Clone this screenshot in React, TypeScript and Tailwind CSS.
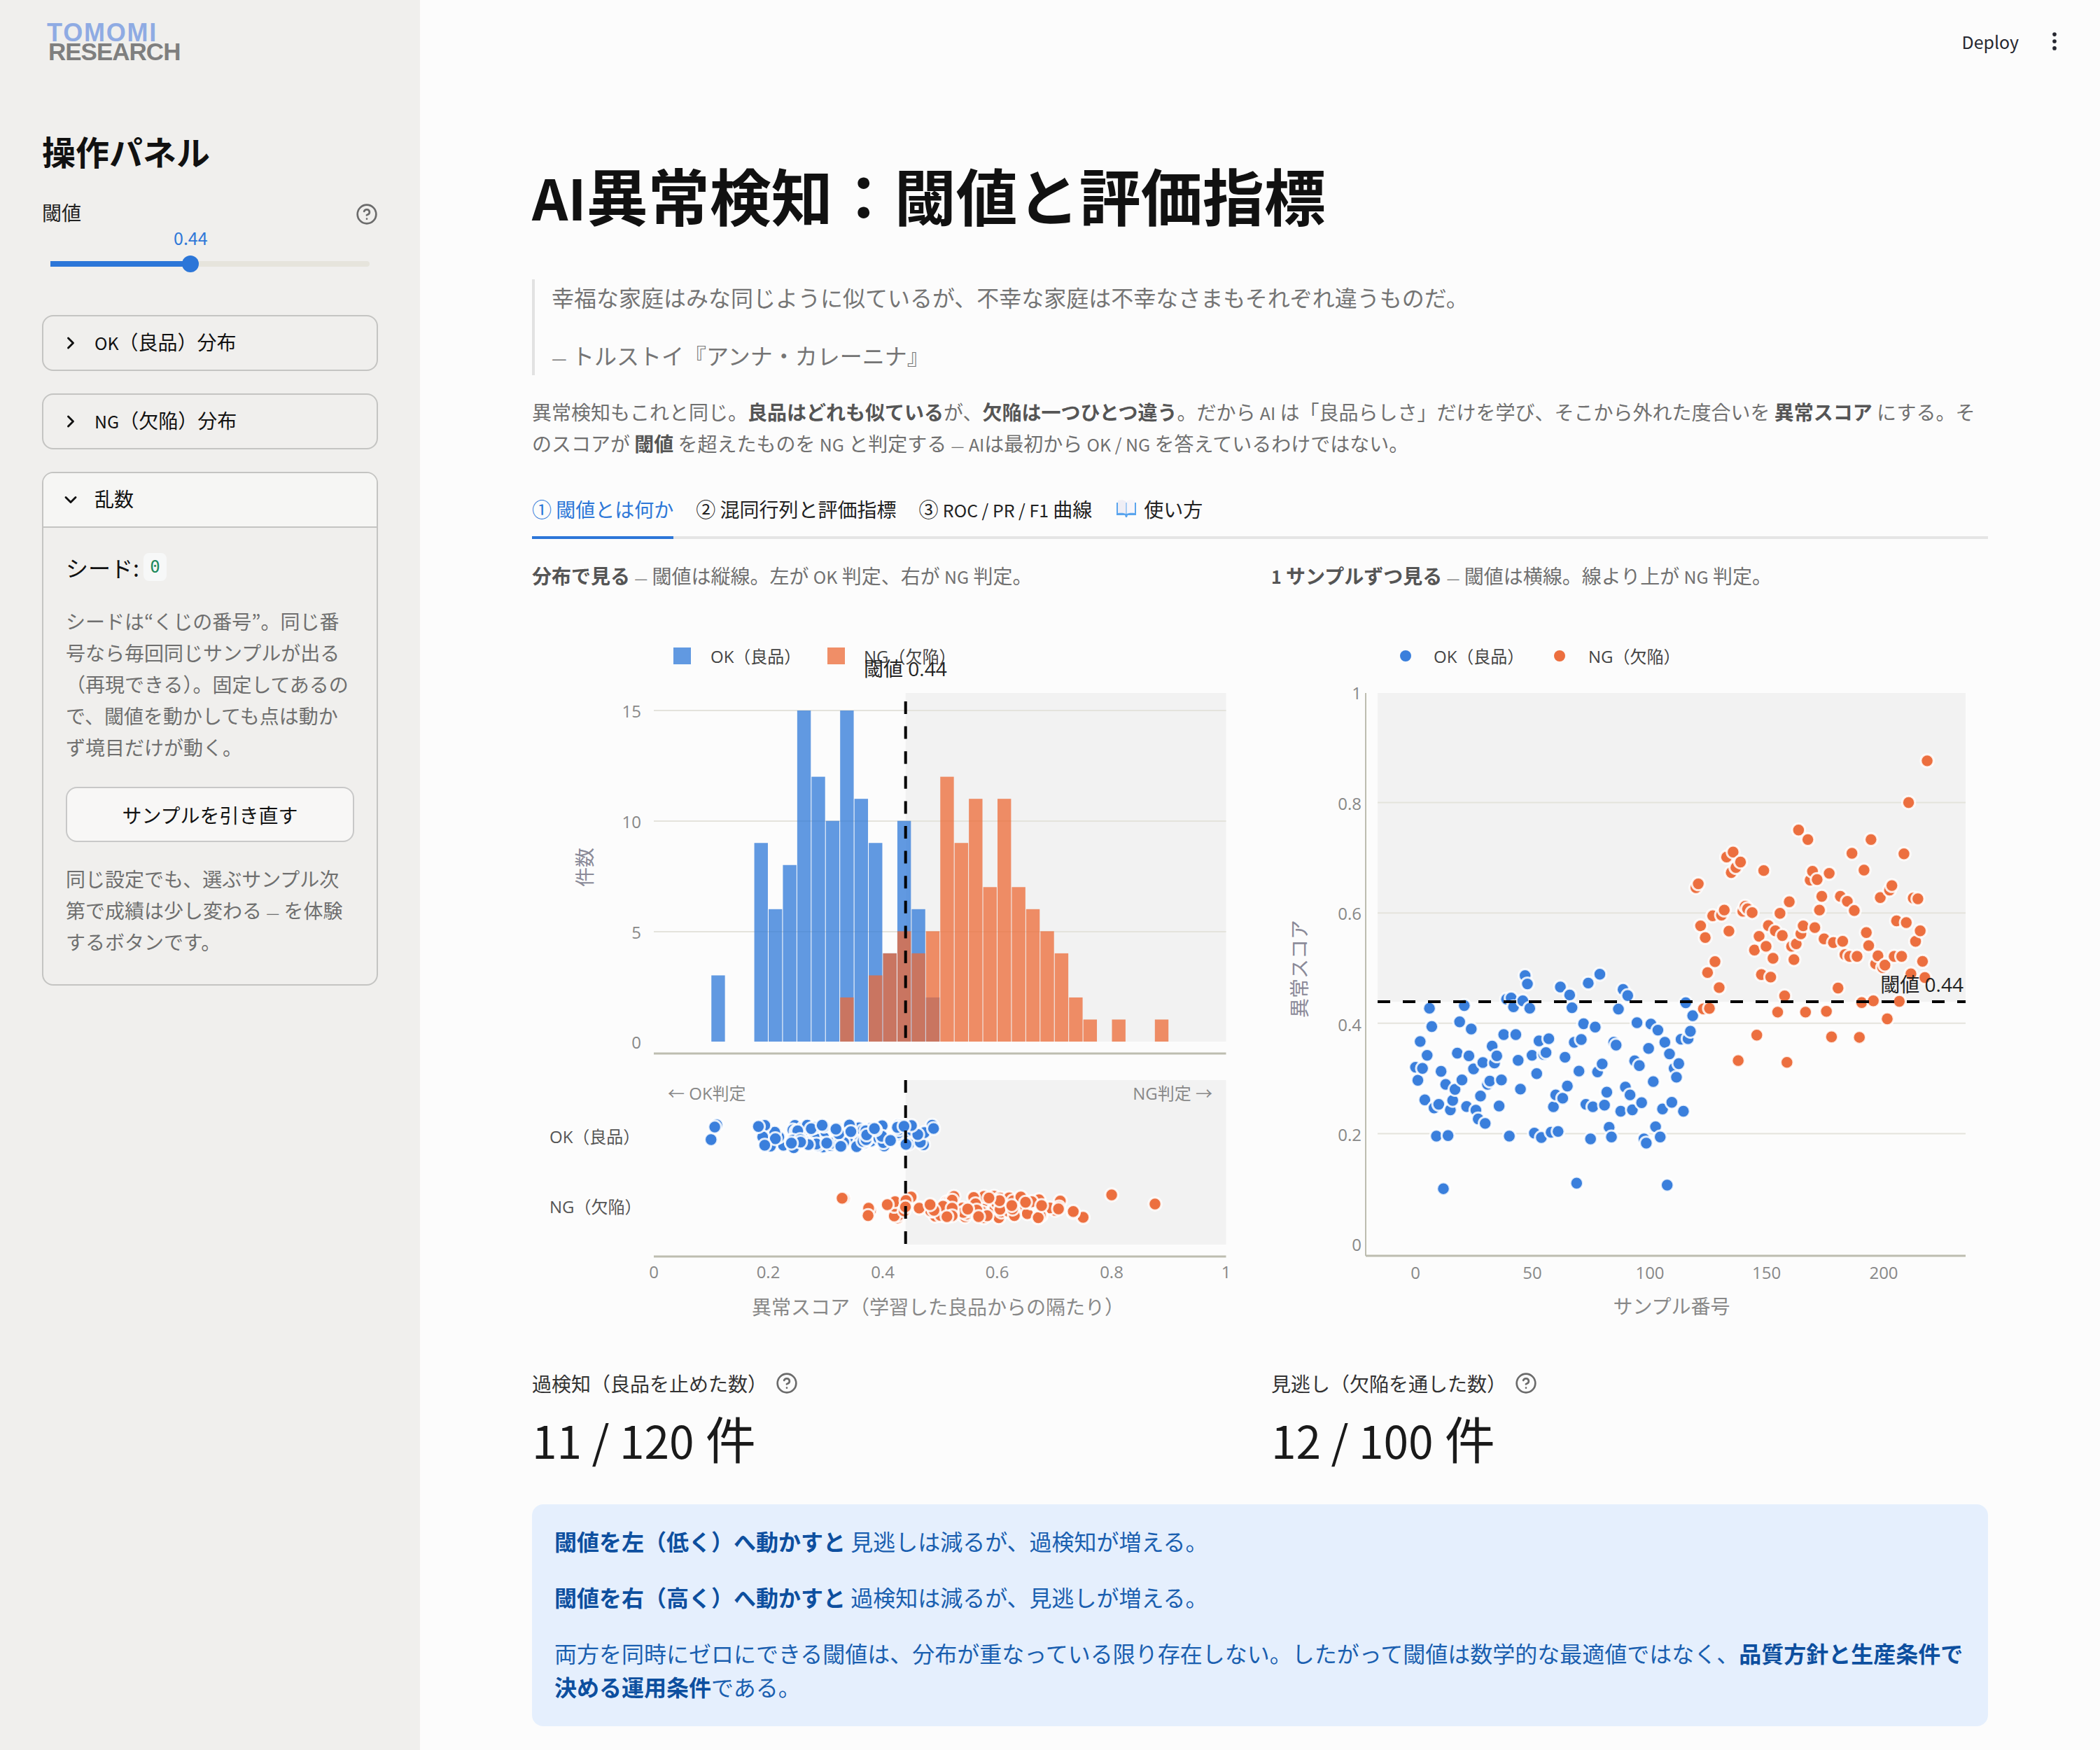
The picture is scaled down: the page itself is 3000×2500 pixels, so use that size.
import { ChevronDown, ChevronRight, CircleHelp, EllipsisVertical } from 'lucide-react';

const OK_COLOR = '#2e78d8';
const NG_COLOR = '#ec6a35';
const THRESHOLD = 0.44;

// 0.025 刻みのビン番号 → 件数（0.1 始まり）
const OK_BINS: [number, number][] = [
  [0, 3], [3, 9], [4, 6], [5, 8], [6, 15], [7, 12], [8, 10], [9, 15], [10, 11], [11, 9], [12, 4], [13, 10], [14, 6], [15, 2],
];
const NG_BINS: [number, number][] = [
  [9, 2], [11, 3], [12, 4], [13, 5], [14, 4], [15, 5], [16, 12], [17, 9], [18, 11], [19, 7], [20, 11], [21, 7], [22, 6],
  [23, 5], [24, 4], [25, 2], [26, 1], [28, 1], [31, 1],
];

// [x, y] as read off the scatter plot
const OK_POINTS: [number, number][] = [
  [335, 568], [340, 615], [345, 475], [350, 572], [355, 686], [360, 525], [365, 355], [370, 421], [375, 715], [380, 817],
  [385, 702], [390, 583], [395, 1007], [400, 630], [405, 815], [410, 722], [415, 688], [420, 648], [425, 517], [430, 404],
  [435, 614], [440, 345], [445, 710], [450, 527], [455, 430], [460, 574], [465, 723], [470, 755], [475, 672], [480, 551],
  [485, 771], [490, 630], [495, 618], [500, 492], [505, 553], [510, 527], [515, 708], [520, 614], [525, 450], [531, 322],
  [537, 817], [541, 318], [546, 350], [551, 450], [556, 543], [561, 647], [566, 328], [571, 237], [576, 267], [581, 355],
  [586, 525], [591, 806], [596, 591], [601, 473], [606, 822], [611, 522], [616, 515], [627, 803], [622, 465], [632, 711],
  [637, 668], [642, 800], [647, 278], [652, 680], [657, 532], [662, 636], [667, 307], [672, 353], [677, 478], [682, 987],
  [687, 582], [692, 468], [697, 411], [702, 702], [707, 264], [712, 827], [717, 711], [722, 423], [727, 585], [732, 232],
  [737, 556], [742, 705], [747, 658], [752, 785], [757, 820], [762, 478], [767, 488], [772, 358], [777, 727], [782, 287],
  [787, 640], [792, 309], [797, 668], [802, 722], [807, 545], [812, 407], [817, 562], [822, 696], [827, 827], [832, 842],
  [837, 500], [842, 412], [847, 620], [852, 783], [857, 434], [862, 820], [867, 719], [872, 478], [877, 994], [882, 520],
  [887, 695], [892, 572], [897, 604], [902, 555], [907, 467], [912, 727], [917, 335], [922, 465], [927, 438], [932, 382],
];
const NG_POINTS: [number, number][] = [
  [939, 1030], [944, 1015], [949, 1183], [955, 1515], [959, 1230], [964, 1370], [968, 1513], [975, 1143], [980, 1326], [989, 1430],
  [994, 1140], [1000, 1120], [1005, 908], [1010, 1204], [1015, 970], [1019, 888], [1025, 950], [1030, 1722], [1035, 928], [1040, 1125],
  [1045, 1105], [1050, 1115], [1060, 1130], [1065, 1280], [1070, 1620], [1075, 1225], [1080, 1378], [1085, 962], [1090, 1265], [1095, 1182],
  [1100, 1388], [1105, 1313], [1110, 1203], [1115, 1528], [1120, 1133], [1125, 1222], [1130, 1463], [1135, 1729], [1140, 1087], [1145, 1265],
  [1150, 1318], [1155, 1255], [1160, 800], [1165, 1215], [1170, 1183], [1175, 1528], [1180, 838], [1185, 1000], [1190, 965], [1195, 1190],
  [1200, 998], [1205, 1120], [1210, 1065], [1215, 1235], [1220, 1525], [1226, 973], [1231, 1627], [1235, 1250], [1245, 1432], [1250, 1065],
  [1255, 1245], [1260, 1298], [1265, 1085], [1270, 1305], [1275, 893], [1280, 1122], [1286, 1305], [1291, 1629], [1296, 1490], [1301, 960],
  [1306, 1210], [1311, 1262], [1316, 838], [1321, 1483], [1326, 1335], [1331, 1303], [1336, 1070], [1341, 1350], [1346, 1340], [1351, 1555],
  [1356, 1040], [1361, 1022], [1366, 1305], [1371, 1163], [1377, 1485], [1382, 1305], [1387, 895], [1392, 1170], [1397, 690], [1402, 1375],
  [1407, 1072], [1412, 1245], [1417, 1075], [1422, 1203], [1427, 1325], [1432, 1390], [1437, 523],
];

const okSamples = OK_POINTS.map(([x, y]) => ({ cx: 1800 + x / 1.5077, score: 0.6053 - y / 1993 }));
const ngSamples = NG_POINTS.map(([x, y]) => ({ cx: 1800 + x / 1.5077, score: 1.1129 - y / 2206 }));

// 外れ値だけは見た目どおりの縦位置に固定
const OK_STRIP_Y: Record<number, number> = { 12: 1628, 69: 1607, 108: 1610 };
const NG_STRIP_Y: Record<number, number> = { 17: 1712, 88: 1707, 96: 1720 };

const histX = (score: number) => 934 + 817.5 * score;
const scatterY = (score: number) => 1777 - 788 * score;

function jitter(i: number) {
  const s = Math.sin(i * 127.1 + 3.7) * 43758.5453;
  return s - Math.floor(s);
}

/** ラテン文字は本文より一回り小さく組む（CJK フォントの欧文が大きいため） */
function L({ children }: { children: React.ReactNode }) {
  return <span className="text-[0.89em] leading-[0]">{children}</span>;
}

function Dash() {
  return <span className="text-[0.76em] leading-[0]">—</span>;
}

function Dot({ cx, cy, fill }: { cx: number; cy: number; fill: string }) {
  return <circle cx={cx} cy={cy} r={9.2} fill={fill} stroke="#ffffff" strokeWidth={3} strokeOpacity={0.85} />;
}

function Label({
  x,
  y,
  children,
  anchor = 'start',
  fill = '#888888',
  size = 24,
  rotate = false,
}: {
  x: number;
  y: number;
  children: React.ReactNode;
  anchor?: 'start' | 'middle' | 'end';
  fill?: string;
  size?: number;
  rotate?: boolean;
}) {
  return (
    <text
      x={x}
      y={y}
      textAnchor={anchor}
      dominantBaseline="central"
      fill={fill}
      fontSize={size}
      transform={rotate ? `rotate(-90 ${x} ${y})` : undefined}
    >
      {children}
    </text>
  );
}

function Bars({ bins, fill }: { bins: [number, number][]; fill: string }) {
  return (
    <g fill={fill} fillOpacity={0.75}>
      {bins.map(([k, count]) => (
        <rect key={k} x={histX(0.1 + 0.025 * k) + 0.5} y={1488 - count * 31.53} width={19.4} height={count * 31.53} />
      ))}
    </g>
  );
}

function DistributionChart() {
  const lineX = histX(THRESHOLD);
  return (
    <svg viewBox="760 870 1024 1030" className="block h-[1030px] w-[1024px] font-['Open_Sans','Noto_Sans_CJK_JP',sans-serif]">
      <rect x={962} y={925} width={25} height={24} fill={OK_COLOR} fillOpacity={0.75} />
      <Label x={1015} y={937} fill="#444444">OK（良品）</Label>
      <rect x={1182} y={925} width={25} height={24} fill={NG_COLOR} fillOpacity={0.75} />
      <Label x={1234} y={937} fill="#444444">NG（欠陥）</Label>

      {/* 上段: ヒストグラム */}
      <rect x={lineX} y={990} width={1751.5 - lineX} height={498} fill="#f2f2f2" />
      {[1015, 1173, 1331].map((y) => (
        <line key={y} x1={934} x2={1751.5} y1={y} y2={y} stroke="#e4e3dc" strokeWidth={2} />
      ))}
      <Bars bins={OK_BINS} fill={OK_COLOR} />
      <Bars bins={NG_BINS} fill={NG_COLOR} />
      <line x1={934} x2={1751.5} y1={1505} y2={1505} stroke="#bdbdb0" strokeWidth={3} />
      {[[15, 1015], [10, 1173], [5, 1331], [0, 1488]].map(([v, y]) => (
        <Label key={v} x={916} y={y} anchor="end">{v}</Label>
      ))}
      <Label x={835} y={1239} anchor="middle" size={28} fill="#8a8a98" rotate>件数</Label>
      <line x1={lineX} x2={lineX} y1={1002} y2={1488} stroke="#000000" strokeWidth={4} strokeDasharray="18 17.6" />
      <Label x={1234} y={955} fill="#222222" size={28}>閾値 0.44</Label>

      {/* 下段: ストリップ */}
      <rect x={lineX} y={1543} width={1751.5 - lineX} height={235} fill="#f2f2f2" />
      {okSamples.map((s, i) => (
        <Dot key={i} cx={histX(s.score)} cy={OK_STRIP_Y[i] ?? 1607 + 33 * jitter(i)} fill="#3a7fdc" />
      ))}
      {ngSamples.map((s, i) => (
        <Dot key={i} cx={histX(s.score)} cy={NG_STRIP_Y[i] ?? 1708 + 33 * jitter(i + 300)} fill="#ec6f3f" />
      ))}
      <line x1={lineX} x2={lineX} y1={1543} y2={1778} stroke="#000000" strokeWidth={4} strokeDasharray="18 18" />
      <line x1={934} x2={1751.5} y1={1795} y2={1795} stroke="#bdbdb0" strokeWidth={3} />
      <Label x={954} y={1561}>← OK判定</Label>
      <Label x={1732} y={1561} anchor="end">NG判定 →</Label>
      <Label x={785} y={1623} fill="#555555">OK（良品）</Label>
      <Label x={785} y={1723} fill="#555555">NG（欠陥）</Label>
      {[['0', 934], ['0.2', 1097.5], ['0.4', 1261], ['0.6', 1424.5], ['0.8', 1588], ['1', 1751.5]].map(([v, x]) => (
        <Label key={v} x={x as number} y={1816} anchor="middle">{v}</Label>
      ))}
      <Label x={1340} y={1867} anchor="middle" size={28}>異常スコア（学習した良品からの隔たり）</Label>
    </svg>
  );
}

function SampleChart() {
  return (
    <svg viewBox="1816 870 1024 1030" className="block h-[1030px] w-[1024px] font-['Open_Sans','Noto_Sans_CJK_JP',sans-serif]">
      <circle cx={2008} cy={937} r={8} fill="#3a7fdc" />
      <Label x={2048} y={937} fill="#444444">OK（良品）</Label>
      <circle cx={2228} cy={937} r={8} fill="#ec6f3f" />
      <Label x={2269} y={937} fill="#444444">NG（欠陥）</Label>

      <rect x={1968} y={990} width={840} height={441} fill="#f2f2f2" />
      {[0.8, 0.6, 0.4, 0.2].map((v) => (
        <line key={v} x1={1968} x2={2808} y1={scatterY(v)} y2={scatterY(v)} stroke="#e4e3dc" strokeWidth={2} />
      ))}
      <line x1={1951} x2={1951} y1={990} y2={1794} stroke="#bdbdb0" strokeWidth={2} />
      <line x1={1951} x2={2808} y1={1794} y2={1794} stroke="#bdbdb0" strokeWidth={3} />
      {okSamples.map((s, i) => (
        <Dot key={i} cx={s.cx} cy={scatterY(s.score)} fill="#3a7fdc" />
      ))}
      {ngSamples.map((s, i) => (
        <Dot key={i} cx={s.cx} cy={scatterY(s.score)} fill="#ec6f3f" />
      ))}
      <line x1={1968} x2={2808} y1={1431} y2={1431} stroke="#000000" strokeWidth={4} strokeDasharray="18 18" />
      <Label x={2805} y={1406} anchor="end" fill="#222222" size={28}>閾値 0.44</Label>

      {[['1', 989], ['0.8', 1147.5], ['0.6', 1304.6], ['0.4', 1463], ['0.2', 1620], ['0', 1777]].map(([v, y]) => (
        <Label key={v} x={1945} y={y as number} anchor="end">{v}</Label>
      ))}
      {[['0', 2022], ['50', 2189], ['100', 2357], ['150', 2523.6], ['200', 2691]].map(([v, x]) => (
        <Label key={v} x={x as number} y={1817} anchor="middle">{v}</Label>
      ))}
      <Label x={2388} y={1866} anchor="middle" size={28}>サンプル番号</Label>
      <Label x={1856} y={1384} anchor="middle" size={28} fill="#8a8a98" rotate>異常スコア</Label>
    </svg>
  );
}

function BookIcon() {
  return (
    <svg viewBox="0 0 28 25" className="h-[25px] w-[28px] shrink-0">
      <path d="M0 4h28v18H16l-1 3h-2l-1-3H0z" fill="#5aa5ee" />
      <path d="M2 1c4-1 8-1 11.500 1v18C10 18.500 6 18.500 2 19z" fill="#efeef5" />
      <path d="M26 1c-4-1-8-1-11.500 1v18c3.500-1.500 7.500-1.500 11.500-1z" fill="#f6f5fa" />
    </svg>
  );
}

function Expander({ title }: { title: React.ReactNode }) {
  return (
    <div className="mb-[32px] flex h-[80px] items-center gap-[20px] rounded-[16px] border-2 border-[#c4c4c2] pl-[25px] text-[#111]">
      <ChevronRight size={28} strokeWidth={2.500} className="shrink-0" />
      <span className="-mt-[4px]">{title}</span>
    </div>
  );
}

function Sidebar() {
  return (
    <aside className="w-[600px] shrink-0 bg-[#f0efed] px-[60px] pt-[33px] text-[28px] leading-[44px]">
      <div className="ml-[7px] font-['Liberation_Sans',sans-serif] font-bold">
        <div className="text-[36px] leading-[27px] tracking-[1.800px] text-[#8fabe3]">TOMOMI</div>
        <div className="ml-[2px] text-[35px] leading-[27px] tracking-[-1px] text-[#7f7f7f]">RESEARCH</div>
      </div>

      <h2 className="mt-[98px] text-[48px] leading-[60px] font-bold text-[#111]">操作パネル</h2>

      <div className="mt-[36px] flex items-center justify-between text-[#222]">
        <span>閾値</span>
        <CircleHelp size={32} strokeWidth={2} className="mt-[6px] text-[#6b6b6b]" />
      </div>
      <div className="relative mx-[12px] mt-[48px] mb-[69px] h-[8px] rounded-full bg-[#e6e4dc]">
        <div className="h-full w-[200px] bg-[#2c76d8]" />
        <span className="absolute top-[-49px] left-[176px] text-[25px] leading-[30px] text-[#2e78d8]">0.44</span>
        <span className="absolute top-[-8px] left-[188px] h-[24px] w-[24px] rounded-full bg-[#2c76d8]" />
      </div>

      <Expander title={<><L>OK</L>（良品）分布</>} />
      <Expander title={<><L>NG</L>（欠陥）分布</>} />

      <div className="rounded-[16px] border-2 border-[#c4c4c2] text-[#111]">
        <div className="flex h-[78px] items-center gap-[20px] rounded-t-[14px] border-b-2 border-[#c4c4c2] bg-[#f6f6f4] pl-[25px]">
          <ChevronDown size={28} strokeWidth={2.500} className="shrink-0" />
          <span className="-mt-[4px]">乱数</span>
        </div>
        <div className="px-[32px] pt-[31px] pb-[38px]">
          <div className="flex h-[50px] items-center text-[32px]">
            <span>シード:</span>
            <code className="ml-[6px] flex h-[40px] w-[33px] items-center justify-center rounded-[8px] bg-[#f7f8f8] font-['DejaVu_Sans_Mono',monospace] text-[24px] text-[#1f8a5b]">
              0
            </code>
          </div>
          <p className="mt-[30px] text-[28px] leading-[45px] text-[#6f6f6f]">
            シードは“くじの番号”。同じ番号なら毎回同じサンプルが出る（再現できる）。固定してあるので、閾値を動かしても点は動かず境目だけが動く。
          </p>
          <button
            type="button"
            className="mt-[34px] h-[79px] w-full rounded-[16px] border-2 border-[#c8c8c8] bg-[#f8f7f6] text-center text-[28px] text-[#111]"
          >
            サンプルを引き直す
          </button>
          <p className="mt-[30px] text-[28px] leading-[45px] text-[#6f6f6f]">
            同じ設定でも、選ぶサンプル次第で成績は少し変わる <Dash /> を体験するボタンです。
          </p>
        </div>
      </div>
    </aside>
  );
}

function Metric({ label, value }: { label: string; value: string }) {
  return (
    <div>
      <div className="flex h-[45px] items-center gap-[12px] text-[28px] text-[#333]">
        <span>{label}</span>
        <CircleHelp size={32} strokeWidth={2} className="text-[#6b6b6b]" />
      </div>
      <div className="mt-[14px] text-[72px] leading-[80px] text-[#1a1a1a]">
        <L>{value}</L> 件
      </div>
    </div>
  );
}

export default function App() {
  return (
    <div className="flex h-[2500px] w-[3000px] overflow-hidden bg-[#fcfcfc] font-['Noto_Sans_CJK_JP','Liberation_Sans',sans-serif]">
      <Sidebar />
      <main className="min-w-0 flex-1">
        <header className="flex h-[118px] items-center justify-end gap-[34px] pr-[48px] text-[28px] text-[#262730]">
          <L>Deploy</L>
          <EllipsisVertical size={34} strokeWidth={2} fill="currentColor" />
        </header>

        <div className="px-[160px] pt-[113px]">
          <h1 className="-mt-[4px] text-[88px] leading-[100px] font-bold text-[#111]">
            <span className="text-[0.91em] leading-[0]">AI</span>異常検知：閾値と評価指標
          </h1>

          <blockquote className="mt-[75px] border-l-4 border-[#e2e2e2] pb-[3px] pl-[24px] text-[32px] leading-[51px] text-[#757575]">
            <p className="-mt-[3px]">幸福な家庭はみな同じように似ているが、不幸な家庭は不幸なさまもそれぞれ違うものだ。</p>
            <p className="mt-[32px]"><Dash /> トルストイ『アンナ・カレーニナ』</p>
          </blockquote>

          <p className="mt-[30px] text-[28px] leading-[44.800px] text-[#707070]">
            異常検知もこれと同じ。<strong className="font-bold text-[#555]">良品はどれも似ている</strong>が、
            <strong className="font-bold text-[#555]">欠陥は一つひとつ違う</strong>。だから <L>AI</L> は「良品らしさ」だけを学び、そこから外れた度合いを{' '}
            <strong className="font-bold text-[#555]">異常スコア</strong> にする。そのスコアが{' '}
            <strong className="font-bold text-[#555]">閾値</strong> を超えたものを <L>NG</L> と判定する <Dash /> <L>AI</L>は最初から <L>OK / NG</L> を答えているわけではない。
          </p>

          <nav className="mt-[51px] flex gap-[32px] border-b-4 border-[#e5e5e5] text-[28px] leading-[40px] text-[#222]">
            <span className="-mb-[4px] h-[63px] border-b-4 border-[#2c76d8] text-[#2e78d8]">① 閾値とは何か</span>
            <span>② 混同行列と評価指標</span>
            <span>③ <L>ROC / PR / F1</L> 曲線</span>
            <span className="ml-[3px] flex items-center gap-[11px] self-start">
              <BookIcon />
              使い方
            </span>
          </nav>

          <div className="mt-[30px] grid grid-cols-2 gap-[32px]">
            <div>
              <p className="text-[28px] leading-[45px] text-[#707070]">
                <strong className="font-bold text-[#555]">分布で見る</strong> <Dash /> 閾値は縦線。左が <L>OK</L> 判定、右が <L>NG</L> 判定。
              </p>
              <div className="mt-[25px]">
                <DistributionChart />
              </div>
              <div className="mt-[54px]">
                <Metric label="過検知（良品を止めた数）" value="11 / 120" />
              </div>
            </div>
            <div>
              <p className="text-[28px] leading-[45px] text-[#707070]">
                <strong className="font-bold text-[#555]"><L>1</L> サンプルずつ見る</strong> <Dash /> 閾値は横線。線より上が <L>NG</L> 判定。
              </p>
              <div className="mt-[25px]">
                <SampleChart />
              </div>
              <div className="mt-[54px]">
                <Metric label="見逃し（欠陥を通した数）" value="12 / 100" />
              </div>
            </div>
          </div>

          <div className="mt-[56px] rounded-[16px] bg-[#e5effd] px-[32px] pt-[28px] pb-[33px] text-[32px] leading-[48px] text-[#1a5fb0]">
            <p>
              <strong className="font-bold text-[#0d4f9f]">閾値を左（低く）へ動かすと</strong> 見逃しは減るが、過検知が増える。
            </p>
            <p className="mt-[32px]">
              <strong className="font-bold text-[#0d4f9f]">閾値を右（高く）へ動かすと</strong> 過検知は減るが、見逃しが増える。
            </p>
            <p className="mt-[32px]">
              両方を同時にゼロにできる閾値は、分布が重なっている限り存在しない。したがって閾値は数学的な最適値ではなく、
              <strong className="font-bold text-[#0d4f9f]">品質方針と生産条件で決める運用条件</strong>である。
            </p>
          </div>
        </div>
      </main>
    </div>
  );
}
